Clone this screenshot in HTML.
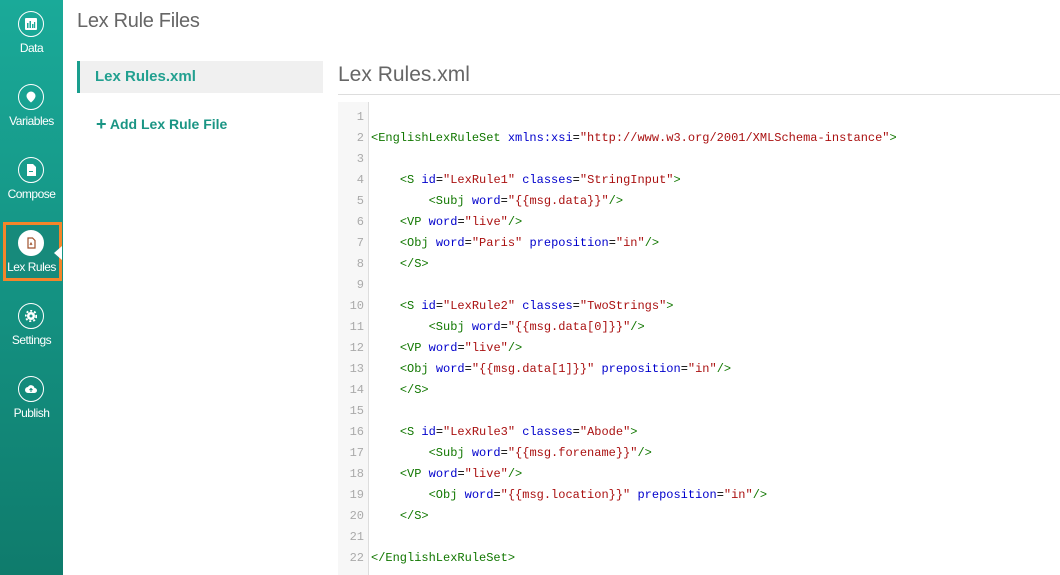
<!DOCTYPE html>
<html><head><meta charset="utf-8"><style>
*{margin:0;padding:0;box-sizing:border-box}
body{width:1060px;height:575px;overflow:hidden;background:#fff;font-family:"Liberation Sans",sans-serif;position:relative}
.sb{position:absolute;left:0;top:0;width:63px;height:575px;background:linear-gradient(#1aaa99,#0f7b6c)}
.it{position:absolute;left:0;width:63px;text-align:center;color:#fff;font-size:12px;letter-spacing:-0.5px}
.it .c{position:absolute;left:18px;width:26px;height:26px;border:1.5px solid #fff;border-radius:50%}
.it .c svg{position:absolute;left:6px;top:6px}
.it span{position:absolute;left:0;width:63px;text-align:center}
.act{position:absolute;left:3px;top:222px;width:59px;height:59px;background:#178a7b;border:3px solid #f5852a}
.tri{position:absolute;left:54px;top:246px;width:0;height:0;border-top:7px solid transparent;border-bottom:7px solid transparent;border-right:8px solid #fff}
h1{position:absolute;left:77px;top:10px;font-size:20px;color:#666;font-weight:normal;letter-spacing:-0.3px}
.li{position:absolute;left:77px;top:61px;width:246px;height:32px;background:#f0f0f0;border-left:3px solid #1a9e8e;color:#22a090;font-weight:bold;font-size:15px;padding:7px 0 0 15px}
.add{position:absolute;left:96px;top:113px;color:#1a9584;font-size:14px;font-weight:bold}
h2{position:absolute;left:338px;top:63px;font-size:21px;font-weight:normal;color:#666}
.hr{position:absolute;left:338px;top:94px;width:722px;height:1px;background:#ddd}
.gut{position:absolute;left:338px;top:102px;width:31px;height:473px;background:#f7f7f7;border-right:1px solid #ddd}
.code{position:absolute;left:338px;top:107px;font-family:"Liberation Mono",monospace;font-size:12px;line-height:21px;white-space:pre}
.ln{display:inline-block;width:26px;text-align:right;color:#aaa;margin-right:7px}
.t{color:#170}.a{color:#00c}.s{color:#a11}
</style></head><body>
<div class="sb">
<div class="it" style="top:11px"><div class="c"><svg width="12" height="12" viewBox="0 0 12 12"><rect x="0" y="0" width="12" height="12" rx="1" fill="#fff"/><rect x="2" y="5" width="1.5" height="5" fill="#1aaa99"/><rect x="4.5" y="3" width="1.5" height="7" fill="#1aaa99"/><rect x="7" y="6" width="1.5" height="4" fill="#1aaa99"/><rect x="9" y="4" width="1.2" height="6" fill="#1aaa99"/></svg></div><span style="top:30px">Data</span></div>
<div class="it" style="top:84px"><div class="c"><svg width="12" height="12" viewBox="0 0 12 12"><path d="M6 0.5a4.5 4.5 0 0 1 4.5 4.5c0 3-4.5 6.5-4.5 6.5S1.5 8 1.5 5A4.5 4.5 0 0 1 6 .5z" fill="#fff"/></svg></div><span style="top:30px">Variables</span></div>
<div class="it" style="top:157px"><div class="c"><svg width="12" height="12" viewBox="0 0 12 12"><path d="M2 0h6l3 3v9H2z" fill="#fff"/><rect x="4" y="7" width="4" height="1" fill="#1aa090"/></svg></div><span style="top:30px">Compose</span></div>
<div class="act"></div><div class="tri"></div>
<div class="it" style="top:230px"><div class="c" style="background:#fff"><svg width="12" height="12" viewBox="0 0 12 12"><path d="M3 1h4.5l2.5 2.5V11H3z" fill="none" stroke="#a0522d" stroke-width="1.2"/><path d="M5 8l1-2 1 2" stroke="#a0522d" fill="none"/></svg></div><span style="top:30px">Lex Rules</span></div>
<div class="it" style="top:303px"><div class="c"><svg width="12" height="12" viewBox="0 0 12 12"><circle cx="6" cy="6" r="4" fill="#fff"/><circle cx="6" cy="6" r="5.3" fill="none" stroke="#fff" stroke-width="2" stroke-dasharray="2 2"/><circle cx="6" cy="6" r="1.5" fill="#16948a"/></svg></div><span style="top:30px">Settings</span></div>
<div class="it" style="top:376px"><div class="c"><svg width="12" height="12" viewBox="0 0 12 12"><path d="M3 10a3 3 0 0 1 0-6 3.5 3.5 0 0 1 6.5 1A2.5 2.5 0 0 1 9.5 10z" fill="#fff"/><path d="M6 9V5.5M4.5 7L6 5.5 7.5 7" stroke="#128a7a" fill="none"/></svg></div><span style="top:30px">Publish</span></div>
</div>
<h1>Lex Rule Files</h1>
<div class="li">Lex Rules.xml</div>
<div class="add"><span style="font-size:18px;position:relative;top:1px">+</span> Add Lex Rule File</div>
<h2>Lex Rules.xml</h2>
<div class="hr"></div>
<div class="gut"></div>
<div class="code"><span class="ln">1</span>
<span class="ln">2</span><span class="t">&lt;EnglishLexRuleSet</span> <span class="a">xmlns:xsi</span>=<span class="s">"http://www.w3.org/2001/XMLSchema-instance"</span><span class="t">&gt;</span>
<span class="ln">3</span>
<span class="ln">4</span>    <span class="t">&lt;S</span> <span class="a">id</span>=<span class="s">"LexRule1"</span> <span class="a">classes</span>=<span class="s">"StringInput"</span><span class="t">&gt;</span>
<span class="ln">5</span>        <span class="t">&lt;Subj</span> <span class="a">word</span>=<span class="s">"{{msg.data}}"</span><span class="t">/&gt;</span>
<span class="ln">6</span>    <span class="t">&lt;VP</span> <span class="a">word</span>=<span class="s">"live"</span><span class="t">/&gt;</span>
<span class="ln">7</span>    <span class="t">&lt;Obj</span> <span class="a">word</span>=<span class="s">"Paris"</span> <span class="a">preposition</span>=<span class="s">"in"</span><span class="t">/&gt;</span>
<span class="ln">8</span>    <span class="t">&lt;/S&gt;</span>
<span class="ln">9</span>
<span class="ln">10</span>    <span class="t">&lt;S</span> <span class="a">id</span>=<span class="s">"LexRule2"</span> <span class="a">classes</span>=<span class="s">"TwoStrings"</span><span class="t">&gt;</span>
<span class="ln">11</span>        <span class="t">&lt;Subj</span> <span class="a">word</span>=<span class="s">"{{msg.data[0]}}"</span><span class="t">/&gt;</span>
<span class="ln">12</span>    <span class="t">&lt;VP</span> <span class="a">word</span>=<span class="s">"live"</span><span class="t">/&gt;</span>
<span class="ln">13</span>    <span class="t">&lt;Obj</span> <span class="a">word</span>=<span class="s">"{{msg.data[1]}}"</span> <span class="a">preposition</span>=<span class="s">"in"</span><span class="t">/&gt;</span>
<span class="ln">14</span>    <span class="t">&lt;/S&gt;</span>
<span class="ln">15</span>
<span class="ln">16</span>    <span class="t">&lt;S</span> <span class="a">id</span>=<span class="s">"LexRule3"</span> <span class="a">classes</span>=<span class="s">"Abode"</span><span class="t">&gt;</span>
<span class="ln">17</span>        <span class="t">&lt;Subj</span> <span class="a">word</span>=<span class="s">"{{msg.forename}}"</span><span class="t">/&gt;</span>
<span class="ln">18</span>    <span class="t">&lt;VP</span> <span class="a">word</span>=<span class="s">"live"</span><span class="t">/&gt;</span>
<span class="ln">19</span>        <span class="t">&lt;Obj</span> <span class="a">word</span>=<span class="s">"{{msg.location}}"</span> <span class="a">preposition</span>=<span class="s">"in"</span><span class="t">/&gt;</span>
<span class="ln">20</span>    <span class="t">&lt;/S&gt;</span>
<span class="ln">21</span>
<span class="ln">22</span><span class="t">&lt;/EnglishLexRuleSet&gt;</span></div>
</body></html>
